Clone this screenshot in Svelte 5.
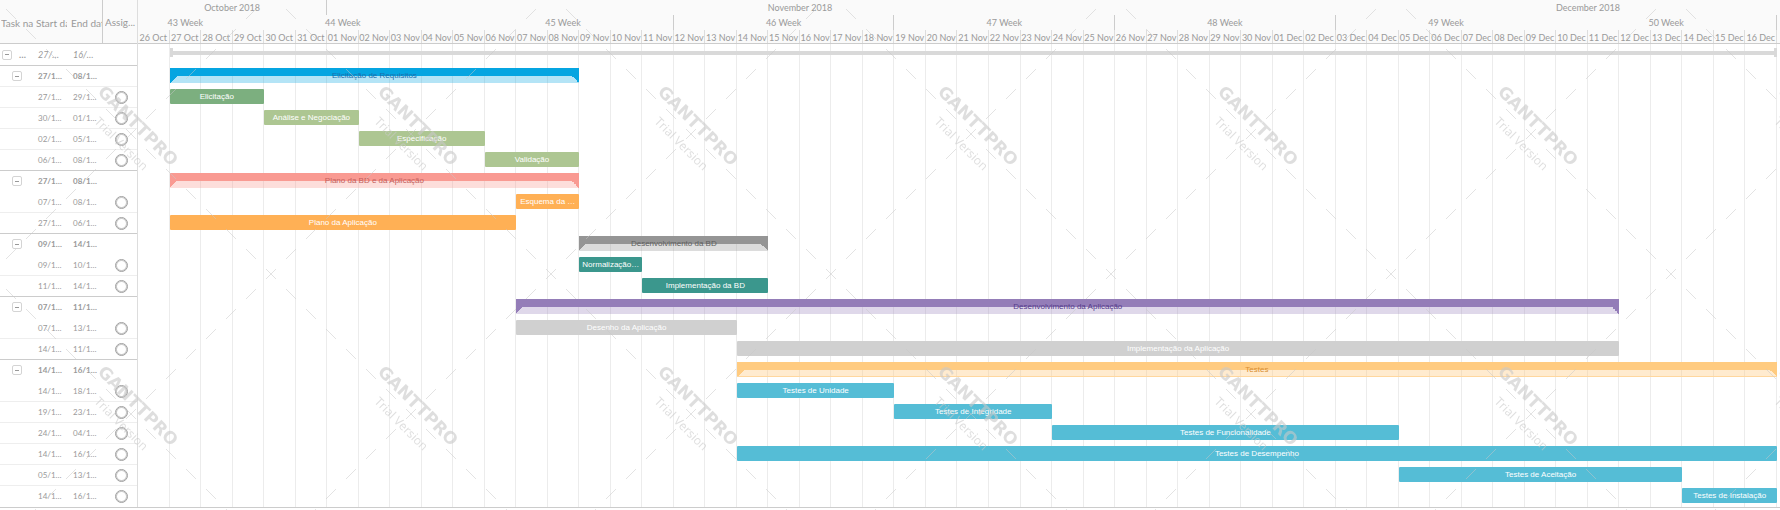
<script>
  const DAYS = 52;
  const start = new Date(2018, 9, 26);
  const monthNames = { 9: 'Oct', 10: 'Nov', 11: 'Dec' };

  const days = Array.from({ length: DAYS }, (_, i) => {
    const d = new Date(start.getFullYear(), start.getMonth(), start.getDate() + i);
    return String(d.getDate()).padStart(2, '0') + ' ' + monthNames[d.getMonth()];
  });

  const months = [
    { label: 'October 2018', from: 0, to: 6, tick: true },
    { label: 'November 2018', from: 6, to: 36 },
    { label: 'December 2018', from: 40, to: 52 }
  ];

  const weeks = [
    { label: '43 Week', from: 0, to: 3 },
    { label: '44 Week', from: 3, to: 10 },
    { label: '45 Week', from: 10, to: 17, tick: true },
    { label: '46 Week', from: 17, to: 24, tick: true },
    { label: '47 Week', from: 24, to: 31, tick: true },
    { label: '48 Week', from: 31, to: 38, tick: true },
    { label: '49 Week', from: 38, to: 45 },
    { label: '50 Week', from: 45, to: 52, tick: true }
  ];

  // from / to are day offsets from 26 October
  const rows = [
    { group: true, name: 'Elicitação de Requisitos', s: '27/1…', e: '08/1…', from: 1, to: 14, tone: 'sky', line: 'soft' },
    { name: 'Elicitação', s: '27/1…', e: '29/1…', from: 1, to: 4, tone: 'green', line: 'soft' },
    { name: 'Análise e Negociação', s: '30/1…', e: '01/1…', from: 4, to: 7, tone: 'lime', line: 'soft' },
    { name: 'Especificação', s: '02/1…', e: '05/1…', from: 7, to: 11, tone: 'lime', line: 'soft' },
    { name: 'Validação', s: '06/1…', e: '08/1…', from: 11, to: 14, tone: 'lime', line: 'strong' },
    { group: true, name: 'Plano da BD e da Aplicação', s: '27/1…', e: '08/1…', from: 1, to: 14, tone: 'red' },
    { name: 'Esquema da …', s: '07/1…', e: '08/1…', from: 12, to: 14, tone: 'orange', line: 'soft' },
    { name: 'Plano da Aplicação', s: '27/1…', e: '06/1…', from: 1, to: 12, tone: 'orange', line: 'strong' },
    { group: true, name: 'Desenvolvimento da BD', s: '09/1…', e: '14/1…', from: 14, to: 20, tone: 'grey' },
    { name: 'Normalização…', s: '09/1…', e: '10/1…', from: 14, to: 16, tone: 'teal', line: 'soft' },
    { name: 'Implementação da BD', s: '11/1…', e: '14/1…', from: 16, to: 20, tone: 'teal', line: 'strong' },
    { group: true, name: 'Desenvolvimento da Aplicação', s: '07/1…', e: '11/1…', from: 12, to: 47, tone: 'purple' },
    { name: 'Desenho da Aplicação', s: '07/1…', e: '13/1…', from: 12, to: 19, tone: 'silver', line: 'soft' },
    { name: 'Implementação da Aplicação', s: '14/1…', e: '11/1…', from: 19, to: 47, tone: 'silver', line: 'strong' },
    { group: true, name: 'Testes', s: '14/1…', e: '16/1…', from: 19, to: 52, tone: 'amber' },
    { name: 'Testes de Unidade', s: '14/1…', e: '18/1…', from: 19, to: 24, tone: 'cyan', line: 'soft' },
    { name: 'Testes de Integridade', s: '19/1…', e: '23/1…', from: 24, to: 29, tone: 'cyan', line: 'soft' },
    { name: 'Testes de Funcionalidade', s: '24/1…', e: '04/1…', from: 29, to: 40, tone: 'cyan', line: 'soft' },
    { name: 'Testes de Desempenho', s: '14/1…', e: '16/1…', from: 19, to: 52, tone: 'cyan', line: 'soft' },
    { name: 'Testes de Aceitação', s: '05/1…', e: '13/1…', from: 40, to: 49, tone: 'cyan', line: 'soft' },
    { name: 'Testes de Instalação', s: '14/1…', e: '16/1…', from: 49, to: 52, tone: 'cyan' }
  ];

  const marks = [-120, -100, -80, -60, -40, -20, 0, 20, 40, 60, 80, 100, 120];
  const corners = [[-140, -140], [140, -140], [-140, 140], [140, 140]];
</script>

<div class="gantt">
  <div class="panes">
    <table class="tasks">
      <colgroup><col class="c-name" /><col class="c-start" /><col class="c-end" /><col class="c-assign" /></colgroup>
      <thead>
        <tr>
          <th><span>Task na</span></th>
          <th><span>Start da</span></th>
          <th class="divided"><span>End dat</span></th>
          <th class="assign"><span>Assig...</span></th>
        </tr>
      </thead>
      <tbody>
        <tr class="project strong">
          <td><div class="name"><button class="toggle" aria-label="Collapse project"></button><span>…</span></div></td>
          <td class="date">27/…</td>
          <td class="date">16/…</td>
          <td></td>
        </tr>
        {#each rows as r}
          <tr class={r.line ?? ''} class:group={r.group}>
            <td>{#if r.group}<div class="name nested"><button class="toggle" aria-label={'Collapse ' + r.name}></button></div>{/if}</td>
            <td class="date">{r.s}</td>
            <td class="date">{r.e}</td>
            <td>{#if !r.group}<button class="person" aria-label={'Assign ' + r.name}></button>{/if}</td>
          </tr>
        {/each}
      </tbody>
    </table>

    <section class="timeline">
      <header>
        <div class="scale months">
          {#each months as m}
            <span class:tick={m.tick} style="grid-column: {m.from + 1} / {m.to + 1}">{m.label}</span>
          {/each}
        </div>
        <div class="scale weeks">
          {#each weeks as w}
            <span class:tick={w.tick} style="grid-column: {w.from + 1} / {w.to + 1}">{w.label}</span>
          {/each}
        </div>
        <div class="scale days">
          {#each days as d}<span>{d}</span>{/each}
        </div>
      </header>
      <div class="chart">
        {#each days as d, i}
          <i class="line" style="grid-column: {i + 1}"></i>
        {/each}
        <div class="span-bar"></div>
        {#each rows as r, i}
          <div
            class="bar {r.tone}"
            class:summary={r.group}
            style="grid-row: {i + 2}; grid-column: {r.from + 1} / {r.to + 1}"
          ><span>{r.name}</span></div>
        {/each}
      </div>
    </section>
  </div>

  <svg class="watermark" aria-hidden="true">
    <defs>
      <pattern id="mark" x="-9" y="-6" width="280" height="280" patternUnits="userSpaceOnUse">
        <g transform="translate(140 140)">
          <g class="dashes">
            {#each marks as m}
              <path d="M{m - 5} {m - 5}l10 10M{m - 5} {5 - m}l10 -10" />
            {/each}
            {#each corners as [x, y]}
              <path d="M{x - 5} {y - 5}l10 10M{x - 5} {y + 5}l10 -10" />
            {/each}
          </g>
          <g transform="rotate(45)">
            <text class="brand" x="-1" y="-5">GANTTPRO</text>
            <text class="trial" x="0" y="18">Trial Version</text>
          </g>
        </g>
      </pattern>
    </defs>
    <rect width="100%" height="100%" fill="url(#mark)" />
  </svg>
</div>

<style>
  :global(body) {
    margin: 0;
    background: #fff;
  }

  .gantt {
    position: relative;
    padding-bottom: 3px;
    font: 9px/12px Lato, sans-serif;
    color: #999;
  }

  .panes {
    display: flex;
    border-bottom: 1px solid #ccc;
  }

  /* task table */
  .tasks {
    flex: none;
    width: 138px;
    table-layout: fixed;
    border-collapse: separate;
    border-spacing: 0;
    border-right: 1px solid #ddd;
  }

  .c-name { width: 34px; }
  .c-start { width: 35px; }
  .c-end { width: 34px; }
  .c-assign { width: 34px; }

  th {
    box-sizing: border-box;
    height: 44px;
    padding: 2px 2px 0;
    background: #fafafa;
    border-bottom: 1px solid #ccc;
    font-size: 10px;
    font-weight: 400;
    text-align: left;
    white-space: nowrap;
  }

  th:first-child { padding-left: 1px; padding-right: 0; }
  th.divided { padding-right: 0; border-right: 1px solid #ccc; }
  th.assign { padding-top: 0; padding-right: 0; }

  th span {
    display: block;
    overflow: hidden;
  }

  td {
    box-sizing: border-box;
    height: 21px;
    padding: 0;
    border-bottom: 1px solid transparent;
    white-space: nowrap;
  }

  .project td { height: 22px; }
  .soft td { border-bottom-color: #eee; }
  .strong td { border-bottom-color: #ccc; }
  .date { padding-left: 4px; font-size: 8px; }
  .project .date { font-size: 9px; font-style: italic; }
  .group .date { font-weight: 700; }

  .name {
    display: flex;
    align-items: center;
    gap: 7px;
    padding-left: 2px;
  }

  .name.nested { padding-left: 12px; }
  .name span { font-weight: 700; }

  .toggle {
    display: grid;
    place-items: center;
    box-sizing: border-box;
    width: 10px;
    height: 10px;
    padding: 0;
    border: 1px solid #d4d4d4;
    border-radius: 2px;
    background: #fff;
  }

  .toggle::before {
    content: '';
    width: 4px;
    height: 1px;
    background: #999;
  }

  .person {
    display: block;
    box-sizing: border-box;
    width: 13px;
    height: 13px;
    margin-left: 12px;
    padding: 0;
    border: 1px solid #a0a0a0;
    box-shadow: inset 0 0 0 1px #c8c8c8;
    border-radius: 50%;
    background: transparent;
  }

  /* timeline */
  .timeline {
    flex: 1;
    min-width: 0;
  }

  header {
    box-sizing: border-box;
    height: 44px;
    padding-right: 3px;
    background: #fafafa;
    border-bottom: 1px solid #ccc;
  }

  .scale,
  .chart {
    display: grid;
    grid-template-columns: repeat(52, minmax(0, 1fr));
  }

  .scale span {
    box-sizing: border-box;
    text-align: center;
    white-space: nowrap;
  }

  .months span { height: 15px; line-height: 16px; }
  .weeks span { height: 15px; line-height: 16px; }
  .days span { height: 13px; line-height: 16px; border-right: 1px solid #ddd; }
  .scale .tick { border-right: 1px solid #ccc; }

  .chart {
    grid-template-rows: 22px repeat(21, 21px);
    padding-right: 3px;
    margin-bottom: -1px;
  }

  .line {
    grid-row: 1 / -1;
    border-right: 1px solid #ececec;
  }

  .span-bar {
    grid-row: 1;
    grid-column: 2 / -1;
    height: 9px;
    margin-top: 4px;
    background:
      linear-gradient(#d9d9d9, #d9d9d9) left / 3px 100% no-repeat,
      linear-gradient(#d9d9d9, #d9d9d9) right / 3px 100% no-repeat,
      linear-gradient(#d9d9d9, #d9d9d9) center / 100% 4px no-repeat;
  }

  .bar {
    height: 15px;
    margin-top: 2px;
    border-radius: 1px;
    background: var(--c);
    color: #fff;
    font: 8px/16px "Liberation Sans", Arial, sans-serif;
    text-align: center;
    white-space: nowrap;
    overflow: hidden;
  }

  .bar.summary {
    border-radius: 0;
    background:
      linear-gradient(var(--c), var(--c)) top / 100% 8px no-repeat,
      linear-gradient(to bottom right, var(--c) 50%, transparent 50%) left bottom / 7px 7px no-repeat,
      linear-gradient(to bottom left, var(--c) 50%, transparent 50%) right bottom / 7px 7px no-repeat,
      var(--soft);
    color: var(--ink);
  }

  .sky { --c: #05a5e1; --soft: rgba(5, 165, 225, 0.3); --ink: #1a6fae; }
  .red { --c: #f99a92; --soft: rgba(249, 154, 146, 0.33); --ink: #c4605c; }
  .grey { --c: #959595; --soft: rgba(149, 149, 149, 0.33); --ink: #5f5f5f; }
  .purple { --c: #947db8; --soft: rgba(148, 125, 184, 0.3); --ink: #553c8b; }
  .amber { --c: #ffcb80; --soft: rgba(255, 203, 128, 0.38); --ink: #d98e30; }
  .summary.amber { box-shadow: inset 0 -1px #ffd79e; }
  .green { --c: #7caf7f; }
  .lime { --c: #adc692; }
  .orange { --c: #ffb055; }
  .teal { --c: #3b978d; }
  .silver { --c: #d0d0d0; }
  .cyan { --c: #55bdd6; }

  /* repeating trial mark */
  .watermark {
    position: absolute;
    inset: 0;
    width: 100%;
    height: 100%;
    pointer-events: none;
  }

  .dashes {
    fill: none;
    stroke: rgba(200, 200, 200, 0.5);
    stroke-width: 1;
  }

  .brand,
  .trial {
    fill: rgba(200, 200, 200, 0.6);
    text-anchor: middle;
  }

  .brand { font: 700 17px "DejaVu Sans", sans-serif; }
  .trial { font: 400 12px "Open Sans", sans-serif; }
</style>
